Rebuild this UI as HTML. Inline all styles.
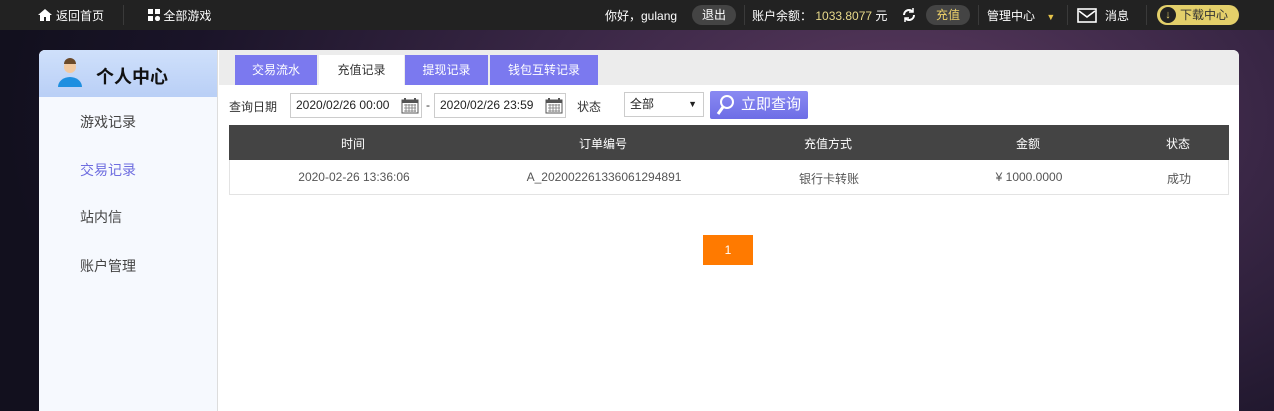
<!DOCTYPE html>
<html><head><meta charset="utf-8"><style>
*{margin:0;padding:0;box-sizing:border-box}
body{width:1274px;height:411px;overflow:hidden;font-family:"Liberation Sans","Noto Sans CJK SC",sans-serif;font-size:12px;color:#333;
background:radial-gradient(ellipse 900px 500px at 900px 120px,#5a3a5e 0%,#3a2746 40%,#1a1428 80%,#12101e 100%);position:relative}
.top{position:absolute;left:0;top:0;width:1274px;height:30px;background:#222;color:#fff;font-size:12px}
.top span{position:absolute;top:7px;white-space:nowrap}
.pill{position:absolute;top:5px;height:20px;border-radius:10px;background:#444;color:#fff;line-height:20px;text-align:center}
.sep{position:absolute;top:5px;width:1px;height:20px;background:#3a3a3a}
.panel{position:absolute;left:39px;top:50px;width:1200px;height:361px;background:#fff;border-radius:6px 6px 0 0;overflow:hidden}
.side{position:absolute;left:0;top:0;width:179px;height:361px;background:#f6f9fe;border-right:1px solid #ddd}
.sh{height:47px;background:linear-gradient(#cfe0fb,#b9cff6);position:relative}
.sh b{position:absolute;left:57px;top:13px;font-size:18px;color:#111}
.side .it{position:absolute;left:41px;font-size:14px;color:#444}
.strip{position:absolute;left:180px;top:0;width:1020px;height:35px;background:#ececec}
.tab{position:absolute;top:5px;height:30px;background:#7b79ef;color:#fff;line-height:30px;text-align:center;font-size:12px}
.tab.on{background:#fff;color:#333}
.inp{position:absolute;top:43px;height:25px;border:1px solid #ccc;background:#fff;line-height:23px;padding-left:5px;font-size:12px;color:#222}
.th{position:absolute;left:190px;top:75px;width:1000px;height:35px;background:#444;color:#fff}
.tr{position:absolute;left:190px;top:110px;width:1000px;height:35px;border:1px solid #e3e3e3;border-top:none;color:#555}
.th span,.tr span{position:absolute;top:10px;transform:translateX(-50%);white-space:nowrap}
</style></head><body>
<div class="top">
<svg style="position:absolute;left:38px;top:9px" width="14" height="12"><path d="M7 0L0 6h2v6h4V8h2v4h4V6h2z" fill="#fff"/></svg>
<span style="left:56px">返回首页</span>
<div class="sep" style="left:123px"></div>
<span style="left:148px"><svg width="12" height="12" style="vertical-align:-1px"><rect width="5" height="5" fill="#fff"/><rect x="7" width="5" height="5" fill="#fff"/><rect y="7" width="5" height="5" fill="#fff"/><circle cx="9.5" cy="9.5" r="2.6" fill="#fff"/></svg> 全部游戏</span>
<span style="left:605px">你好，gulang</span>
<div class="pill" style="left:692px;width:44px">退出</div>
<div class="sep" style="left:744px"></div>
<span style="left:752px">账户余额： <span style="position:static;color:#e8d98a">1033.8077</span> 元</span>
<svg style="position:absolute;left:901px;top:7px" width="16" height="16" viewBox="0 0 16 16"><path d="M3 8a5 5 0 0 1 9-3M13 8a5 5 0 0 1-9 3" stroke="#fff" stroke-width="2" fill="none"/><path d="M12 1v4h-4M4 15v-4h4" stroke="#fff" stroke-width="1.5" fill="none"/></svg>
<div class="pill" style="left:926px;width:44px;color:#f0d36a">充值</div>
<div class="sep" style="left:978px"></div>
<span style="left:987px">管理中心 <span style="position:static;color:#e6c34a;margin-left:8px;font-size:9px">▼</span></span>
<div class="sep" style="left:1067px"></div>
<svg style="position:absolute;left:1077px;top:8px" width="20" height="15"><rect x="1" y="1" width="18" height="13" stroke="#fff" stroke-width="1.6" fill="none"/><path d="M2 3l8 6 8-6" stroke="#fff" stroke-width="1.6" fill="none"/></svg>
<span style="left:1105px">消息</span>
<div class="sep" style="left:1146px"></div>
<div style="position:absolute;left:1157px;top:5px;width:82px;height:20px;border-radius:10px;background:#e3cf6a;color:#333;line-height:20px;padding-left:23px">下载中心</div>
<div style="position:absolute;left:1160px;top:7px;width:16px;height:16px;border-radius:50%;background:#222;color:#e3cf6a;font-size:11px;line-height:16px;text-align:center">↓</div>
</div>
<div class="panel">
<div class="side">
<div class="sh"><svg style="position:absolute;left:17px;top:8px" width="28" height="30"><circle cx="14" cy="9" r="6" fill="#f2c9a0"/><path d="M8 6a6 6 0 0 1 12 0z" fill="#6b4a2a"/><path d="M2 29a12 10 0 0 1 24 0z" fill="#1e8fe0"/></svg><b>个人中心</b></div>
<div class="it" style="top:62px">游戏记录</div>
<div class="it" style="top:110px;color:#6f6ee0">交易记录</div>
<div class="it" style="top:157px">站内信</div>
<div class="it" style="top:206px">账户管理</div>
</div>
<div class="strip"></div>
<div class="tab" style="left:196px;width:82px">交易流水</div>
<div class="tab on" style="left:280px;width:85px">充值记录</div>
<div class="tab" style="left:366px;width:83px">提现记录</div>
<div class="tab" style="left:451px;width:108px">钱包互转记录</div>
<span style="position:absolute;left:190px;top:48px">查询日期</span>
<div class="inp" style="left:251px;width:132px">2020/02/26 00:00</div>
<span style="position:absolute;left:387px;top:48px">-</span>
<div class="inp" style="left:395px;width:132px">2020/02/26 23:59</div>
<svg style="position:absolute;left:362px;top:47px" width="18" height="17"><rect x="1" y="3" width="16" height="13" fill="none" stroke="#555"/><rect x="1" y="3" width="16" height="3" fill="#555"/><path d="M4 1v4M14 1v4" stroke="#555" stroke-width="2"/><path d="M3 8h12M3 11h12M3 14h12M5 7v8M8 7v8M11 7v8M14 7v8" stroke="#777" stroke-width=".8"/></svg>
<svg style="position:absolute;left:506px;top:47px" width="18" height="17"><rect x="1" y="3" width="16" height="13" fill="none" stroke="#555"/><rect x="1" y="3" width="16" height="3" fill="#555"/><path d="M4 1v4M14 1v4" stroke="#555" stroke-width="2"/><path d="M3 8h12M3 11h12M3 14h12M5 7v8M8 7v8M11 7v8M14 7v8" stroke="#777" stroke-width=".8"/></svg>
<span style="position:absolute;left:538px;top:48px">状态</span>
<div class="inp" style="left:585px;width:80px;top:42px">全部<span style="position:absolute;right:6px;font-size:9px">▼</span></div>
<div style="position:absolute;left:671px;top:41px;width:98px;height:28px;border-radius:2px;background:linear-gradient(#8a8af2,#6d6de6);color:#fff;font-size:15px;line-height:28px;padding-left:31px">立即查询</div>
<svg style="position:absolute;left:676px;top:44px" width="20" height="22"><circle cx="12" cy="8" r="6" fill="none" stroke="#fff" stroke-width="2"/><path d="M8 13l-5 7" stroke="#fff" stroke-width="3"/></svg>
<div class="th"><span style="left:124px">时间</span><span style="left:374px">订单编号</span><span style="left:599px">充值方式</span><span style="left:799px">金额</span><span style="left:949px">状态</span></div>
<div class="tr"><span style="left:124px">2020-02-26 13:36:06</span><span style="left:374px">A_202002261336061294891</span><span style="left:599px">银行卡转账</span><span style="left:799px">¥ 1000.0000</span><span style="left:949px">成功</span></div>
<div style="position:absolute;left:664px;top:185px;width:50px;height:30px;background:#ff7a00;color:#fff;text-align:center;line-height:30px">1</div>
</div>
</body></html>
